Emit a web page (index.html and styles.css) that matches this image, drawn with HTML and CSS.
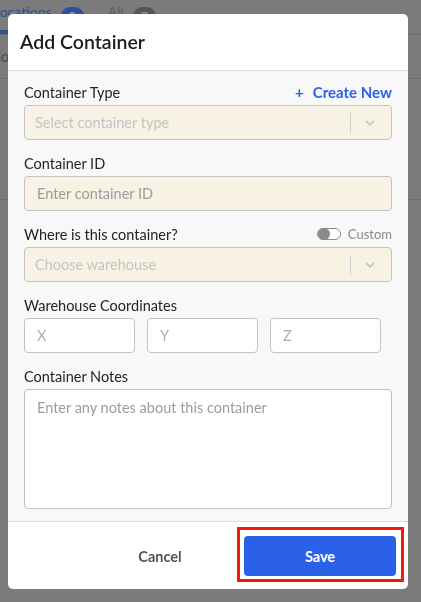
FILE: index.html
```html
<!DOCTYPE html>
<html lang="en">
<head>
  <meta charset="UTF-8" />
  <meta name="viewport" content="width=device-width, initial-scale=1.0"/>
  <title>Add Container</title>
  <link rel="stylesheet" href="styles.css">
</head>
<body>

  <!-- page behind the dialog -->
  <div class="page">
    <div class="tabs">
      <div class="tab active">Locations <span class="badge">0</span></div>
      <div class="tab">All <span class="badge grey">7</span></div>
    </div>
    <div class="page-row"><span class="row-text">Co</span></div>
    <div class="page-row tall"></div>
  </div>

  <div class="backdrop">
    <div class="modal">
      <div class="modal-header">
        <h2>Add Container</h2>
      </div>

      <div class="modal-body">
        <div class="field">
          <div class="label-row">
            <label>Container Type</label>
            <a class="create-link" href="#"><span class="plus">+</span>Create New</a>
          </div>
          <div class="select">
            <span class="select-placeholder">Select container type</span>
            <span class="select-sep"></span>
            <svg class="chevron" width="10" height="6" viewBox="0 0 10 6">
              <path d="M1 1l4 4 4-4" fill="none" stroke="#c9c9c9" stroke-width="1.8"/>
            </svg>
          </div>
        </div>

        <div class="field">
          <div class="label-row">
            <label>Container ID</label>
          </div>
          <input class="input cream" type="text" placeholder="Enter container ID">
        </div>

        <div class="field">
          <div class="label-row">
            <label>Where is this container?</label>
            <div class="toggle-wrap">
              <span class="toggle"><span class="knob"></span></span>
              <span class="toggle-label">Custom</span>
            </div>
          </div>
          <div class="select">
            <span class="select-placeholder">Choose warehouse</span>
            <span class="select-sep"></span>
            <svg class="chevron" width="10" height="6" viewBox="0 0 10 6">
              <path d="M1 1l4 4 4-4" fill="none" stroke="#c9c9c9" stroke-width="1.8"/>
            </svg>
          </div>
        </div>

        <div class="field">
          <div class="label-row">
            <label>Warehouse Coordinates</label>
          </div>
          <div class="coords">
            <input class="input coord" type="text" placeholder="X">
            <input class="input coord" type="text" placeholder="Y">
            <input class="input coord" type="text" placeholder="Z">
          </div>
        </div>

        <div class="field last">
          <div class="label-row">
            <label>Container Notes</label>
          </div>
          <textarea class="notes" placeholder="Enter any notes about this container"></textarea>
        </div>
      </div>

      <div class="modal-footer">
        <button class="btn btn-cancel">Cancel</button>
        <button class="btn btn-save">Save<span class="highlight"></span></button>
      </div>
    </div>
  </div>

</body>
</html>
```

FILE: styles.css
```css
body {
  margin: 0;
  padding: 0;
  font-family: 'Lato', 'Open Sans', sans-serif;
  background: #7b7b7b;
  color: #222;
  height: 100vh;
  overflow: hidden;
}

/* dimmed page behind the dialog */
.page {
  height: 100vh;
}

.tabs {
  display: flex;
  height: 34px;
  border-bottom: 1px solid #6c6c6c;
  margin-left: -7px;
}

.tab {
  display: flex;
  align-items: flex-start;
  padding-top: 3px;
  margin-right: 24px;
  font-size: 14px;
  color: #5e5e5e;
  height: 32px;
  box-sizing: border-box;
}

.tab.active {
  color: #374f86;
  border-bottom: 4px solid #31508f;
  height: 34px;
}

.badge {
  display: inline-block;
  margin-left: 9px;
  margin-top: 4px;
  min-width: 23px;
  height: 18px;
  border-radius: 9px;
  background: #30509a;
  color: #8ea0c8;
  font-size: 12px;
  font-weight: 700;
  text-align: center;
  line-height: 18px;
}

.badge.grey {
  background: #565656;
  color: #8c8c8c;
}

.page-row {
  height: 44px;
  border-bottom: 1px solid #6c6c6c;
  margin-left: -9px;
  padding-top: 12px;
  box-sizing: border-box;
  font-size: 15px;
  color: #4a4a4a;
}

.page-row.tall {
  height: 121px;
}

/* dialog */
.backdrop {
  position: fixed;
  top: 0;
  left: 0;
  right: 0;
  bottom: 0;
  display: flex;
  align-items: flex-start;
  padding: 14px 8px;
}

.modal {
  width: 400px;
  background: #fff;
  border-radius: 5px;
}

.modal-header {
  display: flex;
  align-items: center;
  padding: 0 12px 2px;
  box-sizing: border-box;
  border-bottom: 1px solid #dcdcdc;
  height: 57px;
}

.modal-header h2 {
  margin: 0;
  font-size: 19.5px;
  font-weight: 600;
  color: #1c1c1c;
}

.modal-body {
  background: #f8f8f8;
  padding: 11px 16px 12px;
}

.field {
  margin-bottom: 13px;
}

.field.last {
  margin-bottom: 0;
}

.label-row {
  display: flex;
  justify-content: space-between;
  align-items: center;
  height: 20px;
  margin-bottom: 3px;
}

label {
  font-size: 14.5px;
  color: #232323;
}

.create-link {
  color: #2a62e8;
  text-decoration: none;
  font-size: 15px;
  font-weight: 700;
}

.plus {
  font-size: 15px;
  margin-right: 9px;
}

.toggle-wrap {
  display: flex;
  align-items: center;
}

.toggle {
  width: 22px;
  height: 10px;
  border: 1px solid #8a8a8a;
  border-radius: 6px;
  background: #fff;
  position: relative;
  margin-right: 7px;
}

.knob {
  position: absolute;
  left: 0;
  top: -1px;
  width: 12px;
  height: 12px;
  border-radius: 50%;
  background: #8a8a8a;
}

.toggle-label {
  font-size: 13px;
  color: #8a8a8a;
}

.select {
  display: flex;
  align-items: center;
  height: 35px;
  box-sizing: border-box;
  border: 1px solid #c2c2c2;
  border-radius: 4px;
  background: #f7f2e4;
  padding: 0 16px 0 10px;
}

.select-placeholder {
  flex: 1;
  font-size: 14.5px;
  color: #c4c4c4;
}

.select-sep {
  width: 1px;
  height: 20px;
  background: #cfcfcf;
  margin-right: 14px;
}

.input {
  display: block;
  width: 100%;
  height: 35px;
  box-sizing: border-box;
  border: 1px solid #c2c2c2;
  border-radius: 4px;
  padding: 0 12px;
  font-family: inherit;
  font-size: 14.5px;
  background: #fff;
  outline: none;
}

.input.cream {
  background: #f7f2e4;
}

.input::placeholder,
.notes::placeholder {
  color: #9c9c9c;
}

.coords {
  display: flex;
  gap: 12px;
}

.input.coord {
  width: 111px;
}

.coord::placeholder {
  color: #adadad;
}

.notes {
  display: block;
  width: 100%;
  height: 120px;
  box-sizing: border-box;
  border: 1px solid #c2c2c2;
  border-radius: 4px;
  padding: 9px 12px;
  font-family: inherit;
  font-size: 14.5px;
  resize: none;
  background: #fff;
  outline: none;
}

.modal-footer {
  display: flex;
  justify-content: flex-end;
  gap: 8px;
  padding: 14px 12px 13px;
  border-top: 1px solid #dcdcdc;
}

.btn {
  width: 152px;
  height: 40px;
  border: none;
  border-radius: 4px;
  font-family: inherit;
  font-size: 14.5px;
  font-weight: 700;
  cursor: pointer;
}

.btn-cancel {
  background: transparent;
  color: #555;
}

.btn-save {
  position: relative;
  background: #2b60e8;
  color: #fff;
}

/* red annotation box round the save button */
.highlight {
  position: absolute;
  top: -9px;
  left: -7px;
  right: -8px;
  bottom: -6px;
  border: 3px solid #f41a08;
  pointer-events: none;
}
```
